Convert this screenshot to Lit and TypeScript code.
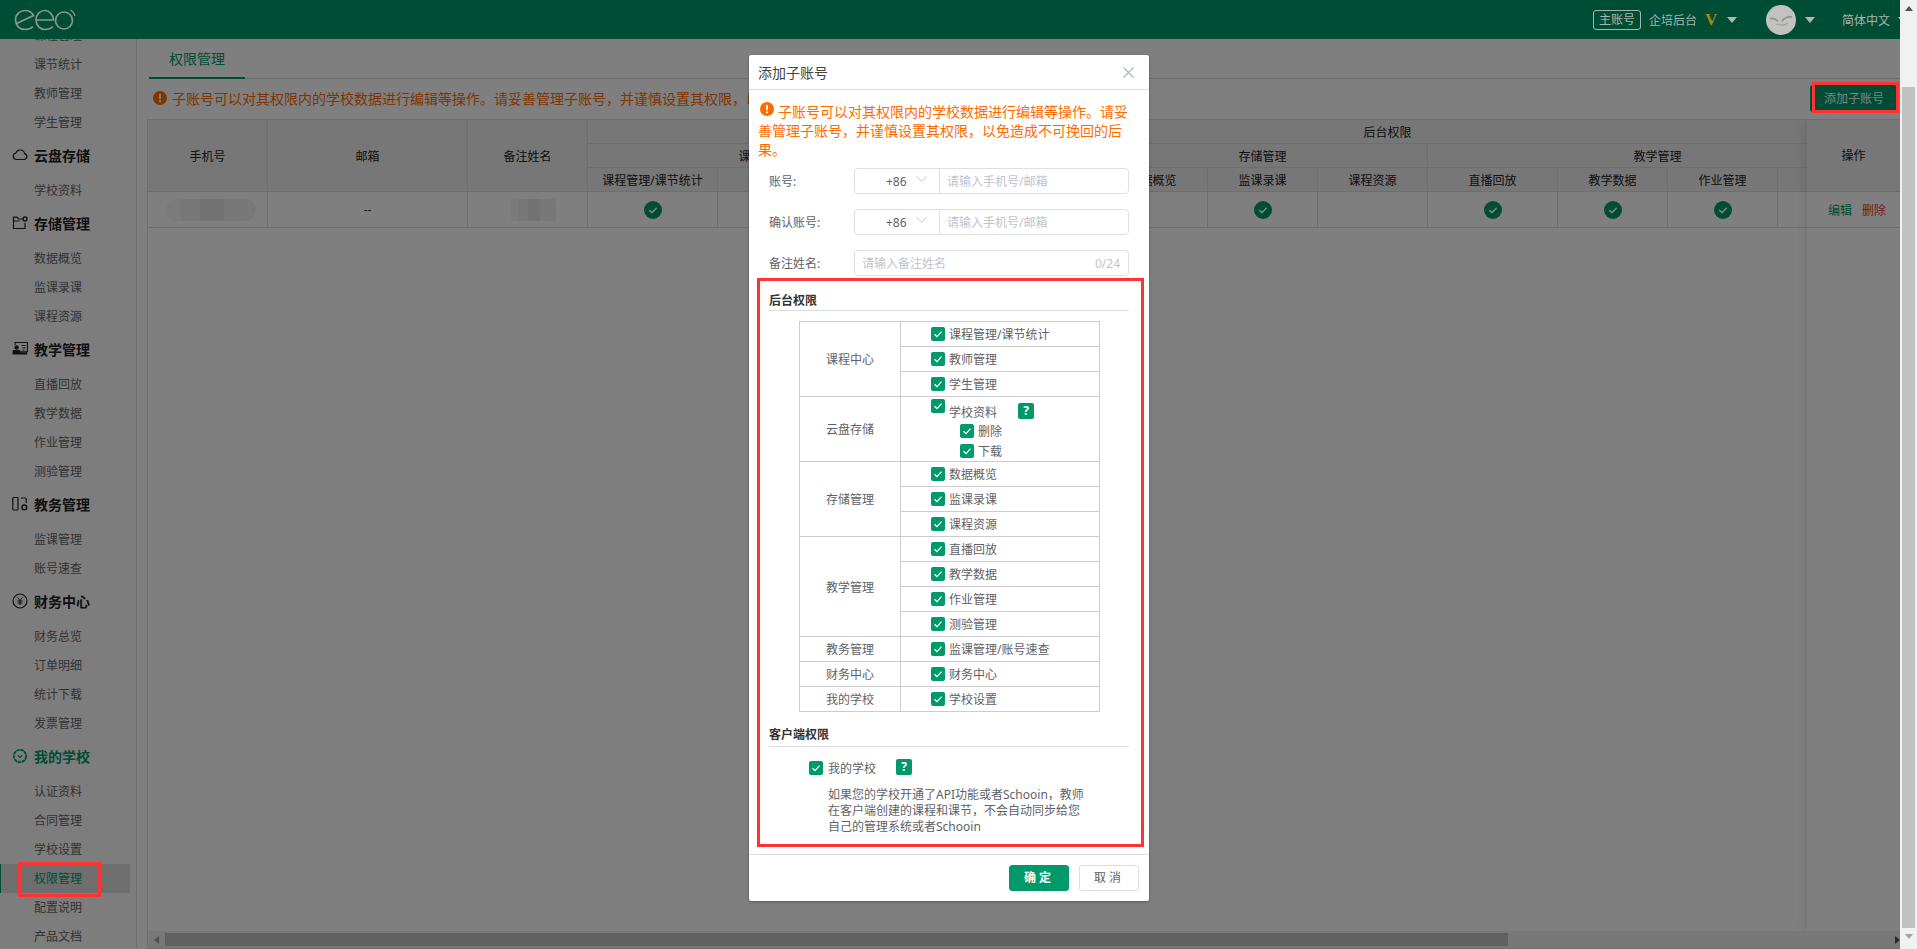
import { LitElement, html, css, svg } from "lit";
import { customElement } from "lit/decorators.js";

const icons: Record<string, unknown> = {
  cloud: svg`<path d="M4.5 12.5h7.5a3 3 0 0 0 .6-5.9 4.6 4.6 0 0 0-8.8-.6 3.3 3.3 0 0 0 .7 6.5z" fill="none" stroke="currentColor" stroke-width="1.2"/>`,
  folder: svg`<path d="M11 4H6.5L5 2.2H1.5v11.3h11.5V8M1.5 6h6" fill="none" stroke="currentColor" stroke-width="1.2"/><circle cx="13" cy="4" r="2" fill="none" stroke="currentColor" stroke-width="1.4"/>`,
  teach: svg`<path d="M3 4V1.5h12.4v9.3H8.5" fill="none" stroke="currentColor" stroke-width="1.1"/><path d="M9.5 4.5h4M10.5 6.8h3M10.5 9h2" stroke="currentColor"/><circle cx="4.6" cy="6.5" r="2.2" fill="currentColor"/><path d="M0.6 13.5V10.300a1.500 1.500 0 0 1 1.500-1.300h5a1.500 1.500 0 0 1 1.500 1.300v1h6.500v2.200z" fill="currentColor"/>`,
  edu: svg`<rect x="0.8" y="1.500" width="5.200" height="12.500" rx="0.800" fill="none" stroke="currentColor" stroke-width="1.200"/><path d="M9 2h4.200a1 1 0 0 1 1 1v4" fill="none" stroke="currentColor" stroke-width="1.200"/><circle cx="12.300" cy="11.400" r="2.400" fill="none" stroke="currentColor" stroke-width="1.400"/>`,
  money: svg`<circle cx="8" cy="8" r="7" fill="none" stroke="currentColor" stroke-width="1.200"/><path d="M5.500 4.300 8 7.500l2.500-3.200M8 7.500v4.500M5.500 8h5M5.500 10h5" fill="none" stroke="currentColor"/>`,
  school: svg`<circle cx="8" cy="8" r="6.200" fill="none" stroke="currentColor" stroke-width="1.800" stroke-dasharray="3.600 0.500"/><path d="M5.700 7.300 8 9.500l2.300-2.200" fill="none" stroke="currentColor" stroke-width="1.200"/>`,
};

const menu = [
  { items: ["课程管理", "课节统计", "教师管理", "学生管理"] },
  { title: "云盘存储", icon: "cloud", items: ["学校资料"] },
  { title: "存储管理", icon: "folder", items: ["数据概览", "监课录课", "课程资源"] },
  { title: "教学管理", icon: "teach", items: ["直播回放", "教学数据", "作业管理", "测验管理"] },
  { title: "教务管理", icon: "edu", items: ["监课管理", "账号速查"] },
  { title: "财务中心", icon: "money", items: ["财务总览", "订单明细", "统计下载", "发票管理"] },
  { title: "我的学校", icon: "school", active: true, items: ["认证资料", "合同管理", "学校设置", "权限管理", "配置说明", "产品文档"] },
];

const tableGroups = [
  { name: "课程中心", cols: [["课程管理/课节统计", 130, 1], ["教师管理", 110, 1], ["学生管理", 110, 1]] },
  { name: "云盘存储", cols: [["学校资料", 160, 1]] },
  { name: "存储管理", cols: [["数据概览", 110, 0], ["监课录课", 110, 1], ["课程资源", 110, 0]] },
  { name: "教学管理", cols: [["直播回放", 130, 1], ["教学数据", 110, 1], ["作业管理", 110, 1], ["测验管理", 110, 0]] },
  { name: "教务管理", cols: [["监课管理", 100, 0]] },
  { name: "财务中心", cols: [["财务中心", 100, 0]] },
  { name: "我的学校", cols: [["学校设置", 100, 0]] },
] as { name: string; cols: [string, number, number][] }[];

const perms = [
  { name: "课程中心", rows: ["课程管理/课节统计", "教师管理", "学生管理"] },
  { name: "云盘存储", school: true, rows: ["学校资料"] },
  { name: "存储管理", rows: ["数据概览", "监课录课", "课程资源"] },
  { name: "教学管理", rows: ["直播回放", "教学数据", "作业管理", "测验管理"] },
  { name: "教务管理", rows: ["监课管理/账号速查"] },
  { name: "财务中心", rows: ["财务中心"] },
  { name: "我的学校", rows: ["学校设置"] },
];

@customElement("app-root")
export class AppRoot extends LitElement {
  static styles = css`
    :host {
      display: block;
      font-family: "Noto Sans", "Noto Sans CJK SC", sans-serif;
      font-size: 12px;
    }
    * { box-sizing: border-box; }
    .page {
      display: flex;
      height: 949px;
      overflow: hidden;
      position: relative;
    }
    .main {
      width: 1900px;
      display: flex;
      flex-direction: column;
      background: #fff;
    }
    .top {
      height: 39px;
      flex: none;
      background: #004d36;
      display: flex;
      align-items: center;
      position: relative;
      z-index: 3;
      color: #a6b6ab;
      overflow: hidden;
    }
    .logo { margin-left: 14px; }
    .top-right {
      margin-left: auto;
      display: flex;
      align-items: center;
      margin-right: -8px;
    }
    .acct {
      width: 48px;
      height: 20px;
      border: 1px solid #a6b6ab;
      border-radius: 3px;
      text-align: center;
      line-height: 18px;
    }
    .corp { margin-left: 8px; }
    .vip {
      font-family: "Liberation Serif", serif;
      font-weight: 700;
      font-size: 17px;
      color: #ad8610;
      margin-left: 8px;
      width: 14px;
    }
    .tri {
      width: 0;
      height: 0;
      border-left: 5px solid transparent;
      border-right: 5px solid transparent;
      border-top: 6px solid #b5b5b5;
    }
    .tri.a { margin-left: 8px; }
    .avatar { margin-left: 29px; width: 30px; height: 30px; }
    .tri.b { margin-left: 9px; }
    .lang { margin-left: 27px; }
    .tri.c { margin-left: 8px; }
    .body { flex: 1; display: flex; min-height: 0; }
    .side {
      width: 137px;
      flex: none;
      background: #fbfbfb;
      border-right: 1px solid #ddd;
      overflow: hidden;
      color: #666;
    }
    .side-in { margin-top: -18px; }
    .group {
      height: 39px;
      display: flex;
      align-items: center;
      padding: 0 0 4px 12px;
      font-size: 14px;
      font-weight: 700;
      color: #222;
    }
    .group svg { width: 16px; height: 16px; margin-right: 6px; flex: none; }
    .group.on { color: #009a6a; }
    .item {
      height: 29px;
      width: 130px;
      line-height: 29px;
      padding-left: 34px;
    }
    .item.on {
      background: #ddd;
      border-left: 1px solid #009a6a;
      padding-left: 33px;
      color: #009a6a;
    }
    .content {
      flex: 1;
      min-width: 0;
      padding-left: 10px;
      display: flex;
      flex-direction: column;
    }
    .tabs {
      height: 40px;
      flex: none;
      margin-left: 2px;
      border-bottom: 1px solid #ddd;
    }
    .tab {
      width: 96px;
      height: 40px;
      line-height: 40px;
      text-align: center;
      font-size: 14px;
      color: #009a6a;
      border-bottom: 2px solid #009a6a;
    }
    .notice {
      height: 40px;
      flex: none;
      display: flex;
      align-items: center;
      padding: 0 3px 2px 6px;
      color: #ff6a00;
      font-size: 14px;
    }
    .notice svg { width: 14px; height: 14px; margin-right: 5px; }
    .add {
      margin-left: auto;
      width: 87px;
      height: 27px;
      line-height: 27px;
      padding-left: 1px;
      text-align: center;
      font-size: 12px;
      color: #fff;
      background: #009a6a;
      border-radius: 3px;
    }
    .grid-wrap {
      flex: 1;
      min-height: 0;
      display: flex;
      flex-direction: column;
      border: 1px solid #ddd;
      border-right: 0;
    }
    .grid-box {
      flex: 1;
      min-height: 0;
      position: relative;
      overflow: hidden;
    }
    table.grid {
      border-collapse: separate;
      border-spacing: 0;
      table-layout: fixed;
      width: 1720px;
      color: #333;
    }
    .grid th, .grid td {
      border-right: 1px solid #ddd;
      border-bottom: 1px solid #ddd;
      padding: 0;
      text-align: center;
      font-weight: 400;
      white-space: nowrap;
      overflow: hidden;
    }
    .grid th { height: 24px; background: #eee; color: #222; }
    .grid td { height: 36px; }
    .ok { display: block; width: 18px; height: 18px; margin: 0 auto; }
    .blur {
      display: block;
      background: linear-gradient(90deg, #f6f6f6 0 17%, #eee 17% 38%, #e4e4e4 38% 65%, #f1f1f1 65%);
    }
    .blur.phone { width: 90px; height: 22px; margin-left: 18px; border-radius: 11px; }
    .blur.name { width: 45px; height: 22px; margin-left: 43px; border-radius: 2px; }
    .fixed {
      position: absolute;
      top: 0;
      right: 0;
      bottom: 0;
      width: 93px;
      background: #fff;
      box-shadow: -4px 0 8px rgba(0, 0, 0, 0.08);
    }
    .fixed-h {
      height: 72px;
      line-height: 71px;
      text-align: center;
      background: #eee;
      border-bottom: 1px solid #ddd;
      color: #222;
    }
    .fixed-b {
      height: 36px;
      border-bottom: 1px solid #ddd;
      display: flex;
      align-items: center;
      gap: 10px;
      padding-left: 21px;
      color: #009a6a;
    }
    .fixed-b .del { color: #e33; }
    .hbar {
      height: 17px;
      flex: none;
      background: #f1f1f1;
      display: flex;
      align-items: center;
    }
    .hbar .thumb {
      width: 1343px;
      height: 13px;
      margin-left: 6px;
      background: #c1c1c1;
    }
    .hbar .ar-l, .hbar .ar-r {
      width: 0;
      height: 0;
      border-top: 4px solid transparent;
      border-bottom: 4px solid transparent;
    }
    .hbar .ar-l { border-right: 5px solid #a0a0a0; margin-left: 6px; }
    .hbar .ar-r { border-left: 5px solid #505050; margin-left: auto; }
    .vbar {
      width: 17px;
      flex: none;
      background: #f1f1f1;
      position: relative;
      display: flex;
      flex-direction: column;
      align-items: center;
    }
    .vbar .up {
      margin-top: 6px;
      border-left: 4px solid transparent;
      border-right: 4px solid transparent;
      border-bottom: 5px solid #505050;
    }
    .vbar .thumb {
      width: 13px;
      height: 841px;
      margin-top: 76px;
      background: #c1c1c1;
    }
    .vbar .down {
      margin-top: 6px;
      border-left: 4px solid transparent;
      border-right: 4px solid transparent;
      border-top: 5px solid #a0a0a0;
    }
    .mask {
      position: absolute;
      left: 0;
      top: 0;
      width: 1900px;
      height: 949px;
      background: rgba(0, 0, 0, 0.5);
      z-index: 2;
      display: flex;
      justify-content: center;
      align-items: flex-start;
      padding-top: 55px;
      padding-right: 2px;
    }
    .modal {
      width: 400px;
      height: 846px;
      background: #fff;
      border-radius: 2px;
      box-shadow: 0 1px 3px rgba(0, 0, 0, 0.3);
      display: flex;
      flex-direction: column;
      color: #606266;
    }
    .m-head {
      height: 35px;
      flex: none;
      border-bottom: 1px solid #ddd;
      display: flex;
      align-items: center;
      justify-content: space-between;
      padding: 0 15px 0 9px;
      font-size: 14px;
      color: #444;
    }
    .m-warn {
      margin-top: 12px;
      padding: 0 19px 0 9px;
      line-height: 19px;
      font-size: 14px;
      color: #ff6a00;
    }
    .m-warn svg {
      width: 14px;
      height: 14px;
      margin: 0 4px 0 2px;
      vertical-align: 1px;
    }
    .rows {
      margin-top: 9px;
      padding: 0 20px;
      display: flex;
      flex-direction: column;
      gap: 15px;
    }
    .row { display: flex; align-items: center; height: 26px; }
    .row label { width: 85px; flex: none; }
    .field {
      flex: 1;
      height: 26px;
      border: 1px solid #dcdfe6;
      border-radius: 4px;
      display: flex;
      align-items: center;
      color: #c0c4cc;
    }
    .code {
      width: 85px;
      height: 24px;
      border-right: 1px solid #dcdfe6;
      display: flex;
      align-items: center;
      padding-left: 31px;
      color: #606266;
    }
    .code svg { margin-left: 9px; width: 11px; height: 6px; margin-top: -4px; }
    .ph { padding-left: 7px; }
    .count { margin-left: auto; padding-right: 8px; }
    .sec {
      margin: 13px 20px 0;
      height: 22px;
      line-height: 20px;
      border-bottom: 1px solid #ddd;
      font-weight: 700;
      color: #333;
    }
    .sec.first { margin-top: 15px; height: 20px; }
    .perm {
      margin: 10px 0 0 50px;
      width: 301px;
      border-collapse: collapse;
      table-layout: fixed;
      color: #606266;
    }
    .perm td {
      border: 1px solid #ccc;
      height: 25px;
      padding: 0;
    }
    .perm td.n { width: 101px; text-align: center; }
    .perm td.v { padding-left: 30px; }
    .chk {
      display: flex;
      align-items: center;
      gap: 4px;
    }
    .box {
      width: 14px;
      height: 14px;
      flex: none;
      border-radius: 2px;
      background: #009a6a;
      display: block;
    }
    .qm {
      width: 16px;
      height: 16px;
      flex: none;
      border-radius: 2px;
      background: #009a6a;
      color: #fff;
      font-weight: 700;
      font-size: 12px;
      line-height: 16px;
      text-align: center;
    }
    .sch-top { display: flex; height: 24px; align-items: flex-start; }
    .sch-top .box { margin-top: 2px; }
    .sch-top .lb { margin: 8px 0 0 4px; line-height: 16px; }
    .sch-top .qm { margin: 6px 0 0 21px; }
    .sub { padding-left: 29px; height: 20px; }
    .client {
      margin: 13px 0 0 60px;
      display: flex;
      align-items: center;
      height: 16px;
      gap: 5px;
    }
    .client .qm { margin-left: 15px; margin-top: -3px; }
    .tip {
      margin: 11px 0 0 79px;
      line-height: 16px;
      color: #606266;
    }
    .m-foot {
      margin-top: auto;
      height: 47px;
      flex: none;
      border-top: 1px solid #ddd;
      display: flex;
      justify-content: flex-end;
      gap: 10px;
      padding: 10px 10px 0 0;
    }
    .btn {
      width: 60px;
      height: 26px;
      line-height: 24px;
      text-align: center;
      border: 1px solid #ddd;
      border-radius: 3px;
      letter-spacing: 3px;
      color: #606266;
    }
    .btn.ok-btn {
      background: #009a6a;
      border-color: #009a6a;
      color: #fff;
      font-weight: 700;
    }
    .mark {
      position: absolute;
      border: 3px solid #f33;
      z-index: 4;
    }
    .mark.m1 { left: 18px; top: 862px; width: 83px; height: 35px; }
    .mark.m2 { left: 1812px; top: 82px; width: 87px; height: 31px; }
    .mark.m3 { left: 757px; top: 278px; width: 387px; height: 569px; }
  `;

  check() {
    return html`<svg class="box" viewBox="0 0 14 14"><path d="M3.500 7.200 6 9.600l4.500-5" fill="none" stroke="#fff" stroke-width="1.200"/></svg>`;
  }

  circleCheck() {
    return html`<svg class="ok" viewBox="0 0 18 18"><circle cx="9" cy="9" r="9" fill="#009a6a"/><path d="M5.300 9.200 8 11.600l4.700-4.800" fill="none" stroke="#fff" stroke-width="1.600"/></svg>`;
  }

  warnIcon() {
    return html`<svg viewBox="0 0 14 14"><circle cx="7" cy="7" r="7" fill="#ff6a00"/><rect x="6" y="2.800" width="2" height="5.400" rx="1" fill="#fff"/><circle cx="7" cy="10.300" r="1.100" fill="#fff"/></svg>`;
  }

  renderSide() {
    return html`<div class="side"><div class="side-in">
      ${menu.map(
        (g) => html`
          ${g.title
            ? html`<div class="group ${g.active ? "on" : ""}"><svg viewBox="0 0 16 16">${icons[g.icon as string]}</svg>${g.title}</div>`
            : ""}
          ${g.items.map((i) => html`<div class="item ${i === "权限管理" ? "on" : ""}">${i}</div>`)}
        `
      )}
    </div></div>`;
  }

  renderGrid() {
    const cols = tableGroups.flatMap((g) => g.cols);
    return html`<table class="grid">
      <colgroup>
        <col style="width:120px" /><col style="width:200px" /><col style="width:120px" />
        ${cols.map((c) => html`<col style="width:${c[1]}px" />`)}
      </colgroup>
      <tr>
        <th rowspan="3">手机号</th>
        <th rowspan="3">邮箱</th>
        <th rowspan="3">备注姓名</th>
        <th colspan="${cols.length}">后台权限</th>
      </tr>
      <tr>${tableGroups.map((g) => html`<th colspan="${g.cols.length}">${g.name}</th>`)}</tr>
      <tr>${cols.map((c) => html`<th>${c[0]}</th>`)}</tr>
      <tr>
        <td><span class="blur phone"></span></td>
        <td>--</td>
        <td><span class="blur name"></span></td>
        ${cols.map((c) => html`<td>${c[2] ? this.circleCheck() : ""}</td>`)}
      </tr>
    </table>`;
  }

  renderPerm() {
    return html`<table class="perm">
      ${perms.flatMap((p) =>
        p.rows.map(
          (r, i) => html`<tr>
            ${i === 0 ? html`<td class="n" rowspan="${p.rows.length}">${p.name}</td>` : ""}
            <td class="v">
              ${p.school
                ? html`<div class="sch-top">${this.check()}<span class="lb">${r}</span><span class="qm">?</span></div>
                    <div class="chk sub">${this.check()}<span>删除</span></div>
                    <div class="chk sub">${this.check()}<span>下载</span></div>`
                : html`<div class="chk">${this.check()}<span>${r}</span></div>`}
            </td>
          </tr>`
        )
      )}
    </table>`;
  }

  render() {
    const chevron = html`<svg viewBox="0 0 11 6"><path d="M0.500 0.500 5.500 5l5-4.500" fill="none" stroke="#c0c4cc"/></svg>`;
    return html`
      <div class="page">
        <div class="main">
          <div class="top">
            <svg class="logo" width="62" height="22" viewBox="0 0 62 22" fill="none" stroke="#8b9590" stroke-width="1.700">
              <path d="M2.500 14.500 19.500 6.500C18 3.500 14.500 1.500 11 1.500 6 1.500 1.500 5.500 1.500 11S5.500 20.500 11 20.500c3 0 6-1 8-3"/>
              <path d="M23 11h16.500C39 5.500 35 1.500 31 1.500 26 1.500 22 5.500 22 11S26 20.500 31 20.500c3 0 6-1 8-3"/>
              <circle cx="50" cy="11.500" r="8.500"/>
              <path d="M56.500 1c2.500 1.500 4 3.500 4.500 6" stroke-width="1.200"/>
            </svg>
            <div class="top-right">
              <span class="acct">主账号</span>
              <span class="corp">企培后台</span>
              <span class="vip">V</span>
              <span class="tri a"></span>
              <svg class="avatar" viewBox="0 0 30 30">
                <circle cx="15" cy="15" r="15" fill="#c2c2c2"/>
                <path d="M4 14c3-2 5 0 8 2M26 12c-3-1-7 1-10 4" fill="none" stroke="#879a87" stroke-width="1.800"/>
                <path d="M10 20c2-2 4 0 7 0 2 0 3-1 5-2" fill="none" stroke="#9db585" stroke-width="1.400"/>
              </svg>
              <span class="tri b"></span>
              <span class="lang">简体中文</span>
              <span class="tri c"></span>
            </div>
          </div>
          <div class="body">
            ${this.renderSide()}
            <div class="content">
              <div class="tabs"><div class="tab">权限管理</div></div>
              <div class="notice">
                ${this.warnIcon()}
                <span>子账号可以对其权限内的学校数据进行编辑等操作。请妥善管理子账号，并谨慎设置其权限，以免造成不可挽回的后果。</span>
                <span class="add">添加子账号</span>
              </div>
              <div class="grid-wrap">
                <div class="grid-box">
                  ${this.renderGrid()}
                  <div class="fixed">
                    <div class="fixed-h">操作</div>
                    <div class="fixed-b"><span>编辑</span><span class="del">删除</span></div>
                  </div>
                </div>
                <div class="hbar">
                  <span class="ar-l"></span>
                  <span class="thumb"></span>
                  <span class="ar-r"></span>
                </div>
              </div>
            </div>
          </div>
        </div>
        <div class="vbar">
          <span class="up"></span>
          <span class="thumb"></span>
          <span class="down"></span>
        </div>
        <div class="mask">
          <div class="modal">
            <div class="m-head">
              <span>添加子账号</span>
              <svg width="11" height="11" viewBox="0 0 11 11"><path d="M0.500 0.500l10 10M10.500 0.500l-10 10" stroke="#aab2c0" stroke-width="1.100"/></svg>
            </div>
            <div class="m-warn">${this.warnIcon()}子账号可以对其权限内的学校数据进行编辑等操作。请妥善管理子账号，并谨慎设置其权限，以免造成不可挽回的后果。</div>
            <div class="rows">
              <div class="row"><label>账号:</label><div class="field"><span class="code">+86${chevron}</span><span class="ph">请输入手机号/邮箱</span></div></div>
              <div class="row"><label>确认账号:</label><div class="field"><span class="code">+86${chevron}</span><span class="ph">请输入手机号/邮箱</span></div></div>
              <div class="row"><label>备注姓名:</label><div class="field"><span class="ph">请输入备注姓名</span><span class="count">0/24</span></div></div>
            </div>
            <div class="sec first">后台权限</div>
            ${this.renderPerm()}
            <div class="sec">客户端权限</div>
            <div class="client">${this.check()}<span>我的学校</span><span class="qm">?</span></div>
            <div class="tip">如果您的学校开通了API功能或者Schooin，教师<br />在客户端创建的课程和课节，不会自动同步给您<br />自己的管理系统或者Schooin</div>
            <div class="m-foot">
              <span class="btn ok-btn">确定</span>
              <span class="btn">取消</span>
            </div>
          </div>
        </div>
        <div class="mark m1"></div>
        <div class="mark m2"></div>
        <div class="mark m3"></div>
      </div>
    `;
  }
}
